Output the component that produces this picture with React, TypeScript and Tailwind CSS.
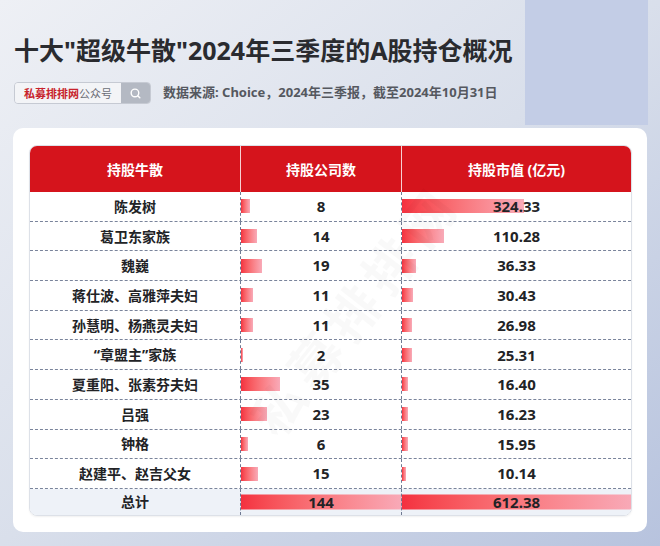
import React from "react";

interface Holder {
  name: string;
  count: number;
  value: string;
}

const holders: Holder[] = [
  { name: "陈发树", count: 8, value: "324.33" },
  { name: "葛卫东家族", count: 14, value: "110.28" },
  { name: "魏巍", count: 19, value: "36.33" },
  { name: "蒋仕波、高雅萍夫妇", count: 11, value: "30.43" },
  { name: "孙慧明、杨燕灵夫妇", count: 11, value: "26.98" },
  { name: "“章盟主”家族", count: 2, value: "25.31" },
  { name: "夏重阳、张素芬夫妇", count: 35, value: "16.40" },
  { name: "吕强", count: 23, value: "16.23" },
  { name: "钟格", count: 6, value: "15.95" },
  { name: "赵建平、赵吉父女", count: 15, value: "10.14" },
];

const TOTAL_COUNT = 144;
const TOTAL_VALUE = 612.38;
const COL2_W = 161;
const COL3_W = 231;

const font = { fontFamily: '"Noto Sans", "Noto Sans CJK SC", sans-serif' };

const Bar = ({ width, tall }: { width: number; tall?: boolean }) => (
  <div
    className={`absolute left-0 top-1/2 -translate-y-1/2 bg-gradient-to-r from-[#f4303f] to-[#f8aab8] ${
      tall ? "h-[15px]" : "h-[14px]"
    }`}
    style={{ width }}
  />
);

const SearchIcon = () => (
  <svg width="13" height="13" viewBox="0 0 24 24" fill="none" stroke="white" strokeWidth="2.6" strokeLinecap="round">
    <circle cx="11" cy="11" r="7" />
    <path d="M16.5 16.5 20 20" />
  </svg>
);

const App = () => {
  return (
    <div
      className="w-[660px] h-[546px] overflow-hidden bg-gradient-to-br from-[#eef0f5] via-[#d9dfeb] to-[#b7c3de] relative"
      style={font}
    >
      {/* header */}
      <div className="flex h-[125px]">
        <div className="flex-1 pl-[14px] pt-[34px]">
          <h1 className="text-[25px] leading-[32px] font-bold text-[#2a2b2f] whitespace-nowrap">
            十大"超级牛散"2024年三季度的A股持仓概况
          </h1>
          <div className="flex items-center mt-[16px] h-[22px]">
            <div className="flex h-[22px] rounded-[4px] border border-[#c6cad3] overflow-hidden">
              <div className="w-[106px] bg-[#f3f4f7] flex items-center pl-[9px] text-[11px] leading-none whitespace-nowrap">
                <span className="text-[#c8232c] font-bold">私募排排网</span>
                <span className="text-[#6b6e76]">公众号</span>
              </div>
              <div className="w-[29px] bg-[#b4b9c3] flex items-center justify-center">
                <SearchIcon />
              </div>
            </div>
            <p className="ml-[12px] text-[13px] font-bold text-[#55585f] whitespace-nowrap">
              数据来源: Choice，2024年三季报，截至2024年10月31日
            </p>
          </div>
        </div>
        <div className="w-[123px] h-[125px] mr-[12px] bg-[#c3cde6]" />
      </div>

      {/* card */}
      <div className="mx-[13px] mt-[3px] h-[404px] bg-white rounded-[10px] pt-[17px] pl-[16px] pr-[15px]">
        <div className="relative rounded-[8px] border border-[#dde1e8] shadow-[0_1px_2px_rgba(0,0,0,0.06)] overflow-hidden">
          <div className="grid grid-cols-[210px_161px_1fr] h-[46px] bg-[#d5141c] text-white text-[14px] font-bold">
            <div className="flex items-center justify-center">持股牛散</div>
            <div className="flex items-center justify-center border-l border-white/80">持股公司数</div>
            <div className="flex items-center justify-center border-l border-white/80">持股市值 (亿元)</div>
          </div>
          {holders.map((h, i) => (
            <div
              key={i}
              className="grid grid-cols-[210px_161px_1fr] h-[29.7px] border-b border-dashed border-[#7a849b] text-[14px] font-bold text-[#222326]"
            >
              <div className="flex items-center justify-center whitespace-nowrap">{h.name}</div>
              <div className="relative flex items-center justify-center border-l border-dashed border-[#6f7a93]">
                <Bar width={(h.count / TOTAL_COUNT) * COL2_W} />
                <span className="relative text-[15px]">{h.count}</span>
              </div>
              <div className="relative flex items-center justify-center border-l border-dashed border-[#6f7a93]">
                <Bar width={(parseFloat(h.value) / TOTAL_VALUE) * COL3_W} />
                <span className="relative text-[15px]">{h.value}</span>
              </div>
            </div>
          ))}
          <div className="grid grid-cols-[210px_161px_1fr] h-[26px] bg-[#eef2f8] text-[14px] font-bold text-[#222326]">
            <div className="flex items-center justify-center">总计</div>
            <div className="relative flex items-center justify-center border-l border-dashed border-[#6f7a93]">
              <Bar width={COL2_W} tall />
              <span className="relative text-[15px]">144</span>
            </div>
            <div className="relative flex items-center justify-center border-l border-dashed border-[#6f7a93]">
              <Bar width={COL3_W} tall />
              <span className="relative text-[15px]">612.38</span>
            </div>
          </div>

          {/* watermark */}
          <div className="pointer-events-none absolute left-[175px] top-[125px] -rotate-[52deg] text-[52px] font-bold text-[#000]/[0.025] whitespace-nowrap tracking-[8px]">
            私募排排网
          </div>
        </div>
      </div>
    </div>
  );
};

export default App;
